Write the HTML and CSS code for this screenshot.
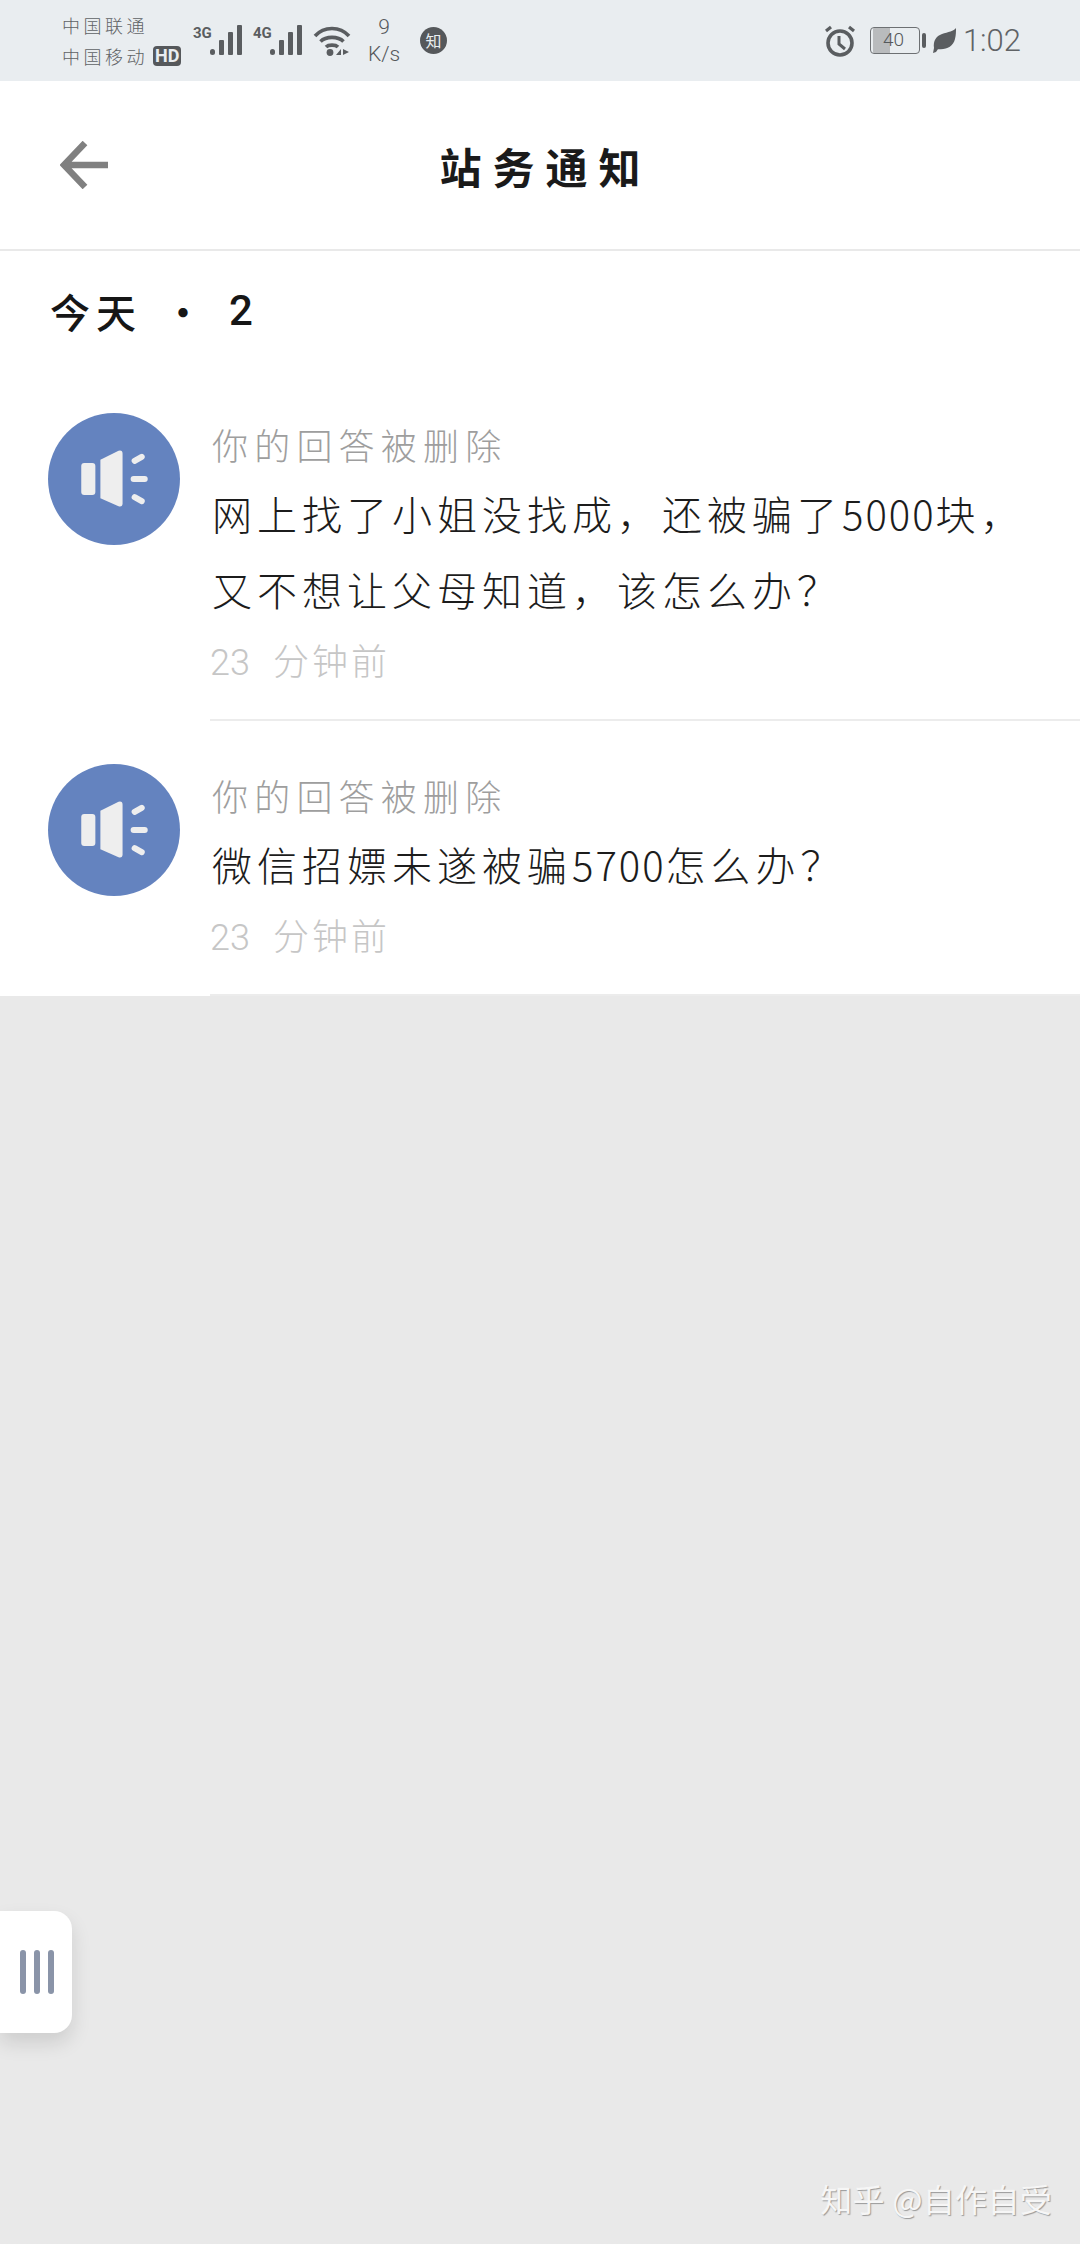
FILE: index.html
```html
<!DOCTYPE html>
<html lang="zh-CN">
<head>
    <meta charset="UTF-8">
    <meta name="viewport" content="width=device-width, initial-scale=1.0">
    <title>站务通知</title>
    <link rel="stylesheet" href="styles.css">
</head>
<body>

    <div class="status-bar">
        <div class="carriers">
            <div class="carrier">中国联通</div>
            <div class="carrier">中国移动<span class="hd">HD</span></div>
        </div>
        <div class="signal">
            <span class="net">3G</span>
            <svg width="33" height="30" viewBox="0 0 33 30"><g fill="#5a5d60"><rect x="0" y="24" width="5" height="6" rx="2.5"/><rect x="9" y="15" width="5" height="15" rx="1"/><rect x="18" y="7" width="5" height="23" rx="1"/><rect x="27" y="0" width="5" height="30" rx="1"/></g></svg>
        </div>
        <div class="signal signal-second">
            <span class="net">4G</span>
            <svg width="33" height="30" viewBox="0 0 33 30"><g fill="#5a5d60"><rect x="0" y="24" width="5" height="6" rx="2.5"/><rect x="9" y="15" width="5" height="15" rx="1"/><rect x="18" y="7" width="5" height="23" rx="1"/><rect x="27" y="0" width="5" height="30" rx="1"/></g></svg>
        </div>
        <svg class="wifi" width="38" height="32" viewBox="0 0 38 32">
            <g fill="none" stroke="#5a5d60" stroke-width="3.6">
                <path d="M2 11 C11 1 27 1 36 11"/>
                <path d="M7.5 16.5 C13 11 25 11 30.5 16.5"/>
                <path d="M13 22 C15.5 19.5 22.5 19.5 25 22"/>
            </g>
            <circle cx="17" cy="27.5" r="3.4" fill="#5a5d60"/>
            <path d="M23 30 L28 24 V30 Z M30 24 L36 27 L30 30 Z" fill="#5a5d60"/>
        </svg>
        <div class="speed"><span>9</span><span>K/s</span></div>
        <div class="zhi">知</div>
        <div class="status-right">
            <svg class="alarm" width="32" height="32" viewBox="0 0 32 32">
                <circle cx="16" cy="18" r="12" fill="none" stroke="#5a5d60" stroke-width="3.6"/>
                <path d="M15 11 V19 L21 24" fill="none" stroke="#5a5d60" stroke-width="3"/>
                <path d="M2 6 L7 2 M30 6 L25 2" stroke="#5a5d60" stroke-width="3.2"/>
            </svg>
            <div class="battery">
                <div class="battery-box">
                    <div class="battery-fill"></div>
                    <span class="battery-num">40</span>
                </div>
                <div class="battery-nub"></div>
            </div>
            <svg class="leaf" width="23" height="26" viewBox="0 0 23 26">
                <path d="M23 0 C21 3 15 4 9 6 C3 8 0 13 1 20 L0 25 L3 24 L12 11 L5 21 C13 22 20 19 22 11 C23 7 23 3 23 0 Z" fill="#5a5d60"/>
            </svg>
            <span class="clock">1:02</span>
        </div>
    </div>

    <div class="header">
        <svg class="back" width="48" height="48" viewBox="0 0 48 48">
            <path d="M25 2 L4 24 L25 46 M4 24 H48" fill="none" stroke="#808080" stroke-width="6.5"/>
        </svg>
        <h1 class="header-title">站务通知</h1>
    </div>

    <div class="notices">
        <div class="section-title">
            <span class="section-day">今天</span>
            <span class="section-dot">·</span>
            <span class="section-num">2</span>
        </div>

        <div class="item">
            <div class="avatar">
                <svg width="132" height="132" viewBox="0 0 131 130">
                    <rect x="33" y="49" width="14" height="32" rx="3" fill="#eeeeee"/>
                    <path d="M52 46 L70 37 Q74 36 74 40 V89 Q74 93 70 92 L52 84 Z" fill="#eeeeee"/>
                    <path d="M86 47 L93 43 M85 65 H96 M86 83 L93 87" stroke="#eeeeee" stroke-width="6" stroke-linecap="round"/>
                </svg>
            </div>
            <div class="item-body">
                <div class="item-title">你的回答被删除</div>
                <div class="item-text">网上找了小姐没找成，还被骗了<span class="digits">5000</span>块，<br>又不想让父母知道，该怎么办？</div>
                <div class="item-time"><span class="time-num">23</span>分钟前</div>
            </div>
        </div>

        <div class="item">
            <div class="avatar">
                <svg width="132" height="132" viewBox="0 0 131 130">
                    <rect x="33" y="49" width="14" height="32" rx="3" fill="#eeeeee"/>
                    <path d="M52 46 L70 37 Q74 36 74 40 V89 Q74 93 70 92 L52 84 Z" fill="#eeeeee"/>
                    <path d="M86 47 L93 43 M85 65 H96 M86 83 L93 87" stroke="#eeeeee" stroke-width="6" stroke-linecap="round"/>
                </svg>
            </div>
            <div class="item-body">
                <div class="item-title">你的回答被删除</div>
                <div class="item-text">微信招嫖未遂被骗<span class="digits">5700</span>怎么办？</div>
                <div class="item-time"><span class="time-num">23</span>分钟前</div>
            </div>
        </div>
    </div>

    <div class="empty"></div>

    <div class="handle">
        <span class="handle-bar"></span>
        <span class="handle-bar"></span>
        <span class="handle-bar"></span>
    </div>

    <div class="watermark">知乎 @自作自受</div>

</body>
</html>
```

FILE: styles.css
```css
body {
    margin: 0;
    height: 2244px;
    display: flex;
    flex-direction: column;
    position: relative;
    overflow: hidden;
    font-family: "Noto Sans CJK SC", "Noto Sans", sans-serif;
    background-color: #e9e9e9;
}

/* status bar */
.status-bar {
    height: 81px;
    flex-shrink: 0;
    display: flex;
    align-items: center;
    padding: 0 59px 0 62px;
    box-sizing: border-box;
    background-color: #e9edf0;
    color: #5a5d60;
}
.carriers {
    width: 131px;
    flex-shrink: 0;
}
.carrier {
    display: flex;
    align-items: center;
    height: 31px;
    font-size: 18px;
    font-weight: 300;
    letter-spacing: 3.5px;
    color: #5f6265;
    white-space: nowrap;
}
.hd {
    margin-left: 5px;
    padding: 0 2px;
    height: 20px;
    line-height: 20px;
    border-radius: 4px;
    background-color: #55585b;
    color: #e9edf0;
    font-family: "Roboto", sans-serif;
    font-size: 18px;
    font-weight: 700;
    letter-spacing: 0;
}
.signal {
    display: flex;
    align-items: flex-start;
    margin-top: -2px;
}
.signal-second {
    margin-left: 10px;
}
.net {
    width: 17px;
    height: 30px;
    font-family: "Liberation Sans Narrow", "Roboto", sans-serif;
    font-size: 15px;
    line-height: 16px;
    font-weight: 700;
}
.wifi {
    margin-left: 10px;
}
.speed {
    width: 42px;
    margin-left: 12px;
    display: flex;
    flex-direction: column;
    align-items: center;
    font-family: "Roboto", sans-serif;
    font-size: 21px;
    font-weight: 300;
    line-height: 27px;
    color: #55585b;
}
.zhi {
    width: 27px;
    height: 27px;
    margin-left: 15px;
    border-radius: 50%;
    background-color: #55585b;
    color: #e9edf0;
    font-size: 16px;
    line-height: 27px;
    text-align: center;
}
.status-right {
    margin-left: auto;
    display: flex;
    align-items: center;
}
.battery {
    display: flex;
    align-items: center;
    margin-left: 14px;
}
.battery-box {
    width: 50px;
    height: 27px;
    box-sizing: border-box;
    position: relative;
    border: 1.5px solid #6d7073;
    border-radius: 4px;
}
.battery-fill {
    width: 17px;
    height: 100%;
    margin-left: 2px;
    background-color: #b9bbbd;
}
.battery-num {
    position: absolute;
    left: 12px;
    top: 0;
    font-family: "Roboto", sans-serif;
    font-size: 19px;
    font-weight: 300;
    line-height: 24px;
    color: #55585b;
}
.battery-nub {
    width: 4px;
    height: 15px;
    margin-left: 2px;
    border-radius: 2px;
    background-color: #5a5d60;
}
.leaf {
    margin-left: 7px;
}
.clock {
    margin-left: 7px;
    font-family: "Roboto", sans-serif;
    font-size: 31px;
    font-weight: 300;
    color: #606366;
}

/* header */
.header {
    height: 170px;
    flex-shrink: 0;
    box-sizing: border-box;
    position: relative;
    display: flex;
    align-items: center;
    justify-content: center;
    background-color: #fff;
    border-bottom: 2px solid #e9e9e9;
}
.back {
    position: absolute;
    left: 60px;
    top: 60px;
}
.header-title {
    margin: 0;
    font-size: 42px;
    font-weight: 700;
    letter-spacing: 11px;
    padding-left: 11px;
    color: #1a1a1a;
}

/* list */
.notices {
    background-color: #fff;
    flex-shrink: 0;
}
.section-title {
    height: 119px;
    padding-left: 50px;
    display: flex;
    align-items: center;
    font-size: 40px;
    font-weight: 500;
    color: #161616;
}
.section-day {
    letter-spacing: 6px;
    width: 113px;
}
.section-dot {
    width: 66px;
}
.section-num {
    font-family: "Roboto", sans-serif;
    font-size: 42px;
}
.item {
    display: flex;
    padding-left: 48px;
}
.avatar {
    width: 132px;
    height: 132px;
    margin-top: 43px;
    margin-right: 30px;
    flex-shrink: 0;
    border-radius: 50%;
    background-color: #6483bf;
}
.avatar svg {
    display: block;
}
.item-body {
    flex: 1;
    padding: 52px 0 38px;
    border-bottom: 2px solid #ececec;
}
.item-title {
    height: 44px;
    padding-left: 2px;
    font-size: 36px;
    font-weight: 300;
    line-height: 44px;
    letter-spacing: 6.2px;
    color: #9e9e9e;
}
.item-text {
    margin-top: 9px;
    padding-left: 2px;
    font-size: 40px;
    font-weight: 300;
    line-height: 76px;
    letter-spacing: 5px;
    color: #1c1c1c;
    white-space: nowrap;
}
.digits {
    letter-spacing: 2px;
}
.item-time {
    margin-top: 10px;
    height: 44px;
    font-size: 36px;
    font-weight: 300;
    line-height: 44px;
    letter-spacing: 3px;
    color: #c6c6c6;
}
.time-num {
    font-family: "Roboto", sans-serif;
    margin-right: 23px;
    letter-spacing: 0;
}

.empty {
    flex: 1;
}

/* floating handle, lies over the page */
.handle {
    position: absolute;
    left: 0;
    top: 1911px;
    width: 72px;
    height: 122px;
    box-sizing: border-box;
    display: flex;
    align-items: center;
    gap: 8px;
    padding-left: 20px;
    background-color: #fff;
    border-radius: 0 18px 18px 0;
    box-shadow: 0 10px 20px rgba(0, 0, 0, 0.12);
}
.handle-bar {
    width: 6px;
    height: 44px;
    border-radius: 3px;
    background-color: #8a94a8;
}

.watermark {
    position: absolute;
    right: 28px;
    top: 2176px;
    font-size: 32px;
    line-height: 44px;
    letter-spacing: 0.3px;
    color: #f6f6f6;
    text-shadow: 1px 1px 1px #9a9a9a;
    white-space: nowrap;
}
```
